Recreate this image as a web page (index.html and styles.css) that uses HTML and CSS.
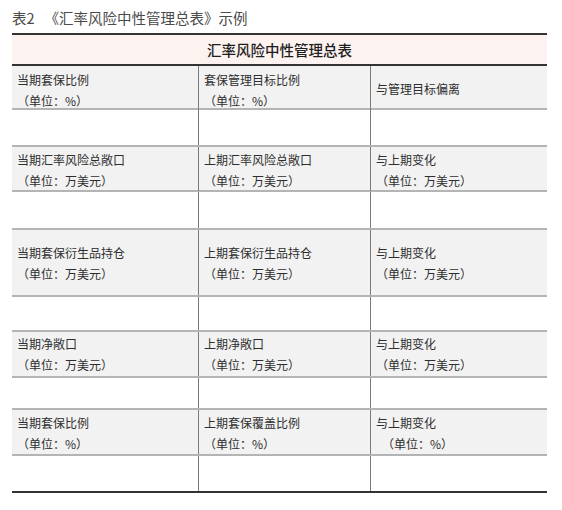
FILE: index.html
```html
<!DOCTYPE html>
<html lang="zh">
<head>
<meta charset="utf-8">
<link rel="stylesheet" href="styles.css">
</head>
<body>
<div class="page">
  <div class="caption"><span class="num">表2</span>《汇率风险中性管理总表》示例</div>
  <div class="table">
    <div class="head">汇率风险中性管理总表</div>

    <div class="row label r1">
      <div class="cell">当期套保比例<br>（单位：%）</div>
      <div class="cell">套保管理目标比例<br>（单位：%）</div>
      <div class="cell mid">与管理目标偏离</div>
    </div>
    <div class="row blank b1"><div class="cell"></div><div class="cell"></div><div class="cell"></div></div>

    <div class="row label r2">
      <div class="cell">当期汇率风险总敞口<br>（单位：万美元）</div>
      <div class="cell">上期汇率风险总敞口<br>（单位：万美元）</div>
      <div class="cell">与上期变化<br>（单位：万美元）</div>
    </div>
    <div class="row blank b2"><div class="cell"></div><div class="cell"></div><div class="cell"></div></div>

    <div class="row label r3">
      <div class="cell">当期套保衍生品持仓<br>（单位：万美元）</div>
      <div class="cell">上期套保衍生品持仓<br>（单位：万美元）</div>
      <div class="cell">与上期变化<br>（单位：万美元）</div>
    </div>
    <div class="row blank b3"><div class="cell"></div><div class="cell"></div><div class="cell"></div></div>

    <div class="row label r4">
      <div class="cell">当期净敞口<br>（单位：万美元）</div>
      <div class="cell">上期净敞口<br>（单位：万美元）</div>
      <div class="cell">与上期变化<br>（单位：万美元）</div>
    </div>
    <div class="row blank b4"><div class="cell"></div><div class="cell"></div><div class="cell"></div></div>

    <div class="row label r5">
      <div class="cell">当期套保比例<br>（单位：%）</div>
      <div class="cell">上期套保覆盖比例<br>（单位：%）</div>
      <div class="cell">与上期变化<br>　（单位：%）</div>
    </div>
    <div class="row blank b5 last"><div class="cell"></div><div class="cell"></div><div class="cell"></div></div>
  </div>
</div>
</body>
</html>
```
FILE: styles.css
```css
html, body {
  margin: 0;
  padding: 0;
  background: #ffffff;
}
body {
  font-family: "Noto Sans CJK SC", "Noto Sans", sans-serif;
  color: #2e2e2e;
}
.page {
  width: 562px;
  height: 510px;
  padding: 8px 15px 0 12px;
  box-sizing: border-box;
}
.caption {
  font-size: 14.5px;
  line-height: 20px;
  height: 20px;
  color: #4a4a4a;
  margin-bottom: 5px;
}
.num {
  margin-right: 10px;
}
.table {
  width: 535px;
  border-top: 2px solid #333333;
  border-bottom: 2px solid #333333;
}
.head {
  height: 29px;
  box-sizing: content-box;
  line-height: 29px;
  background: #fcf2ef;
  text-align: center;
  font-size: 14.5px;
  font-weight: 500;
  color: #1e1e1e;
  border-bottom: 2px solid #333333;
}
.row {
  display: grid;
  grid-template-columns: 187px 172px 176px;
  box-sizing: border-box;
  border-bottom: 2px solid #b4b4b4;
}
.row.last {
  border-bottom: none;
}
.label {
  background: #f2f2f2;
}
.cell {
  font-size: 12px;
  line-height: 21px;
  padding-left: 5px;
  color: #2e2e2e;
  border-right: 1px solid #7a7a7a;
}
.cell:last-child {
  border-right: none;
}
.mid {
  align-self: center;
}
.r1 { height: 44px; }
.r1 .cell { padding-top: 3px; }
.r1 .mid { padding-top: 0; }
.b1 { height: 37px; }
.r2 { height: 45px; }
.r2 .cell { padding-top: 2px; }
.b2 { height: 38px; }
.r3 { height: 67px; }
.r3 .cell { padding-top: 12px; }
.b3 { height: 35px; }
.r4 { height: 46px; }
.r4 .cell { padding-top: 1px; }
.b4 { height: 32px; }
.r5 { height: 46px; }
.r5 .cell { padding-top: 2px; }
.b5 { height: 35px; }
```
